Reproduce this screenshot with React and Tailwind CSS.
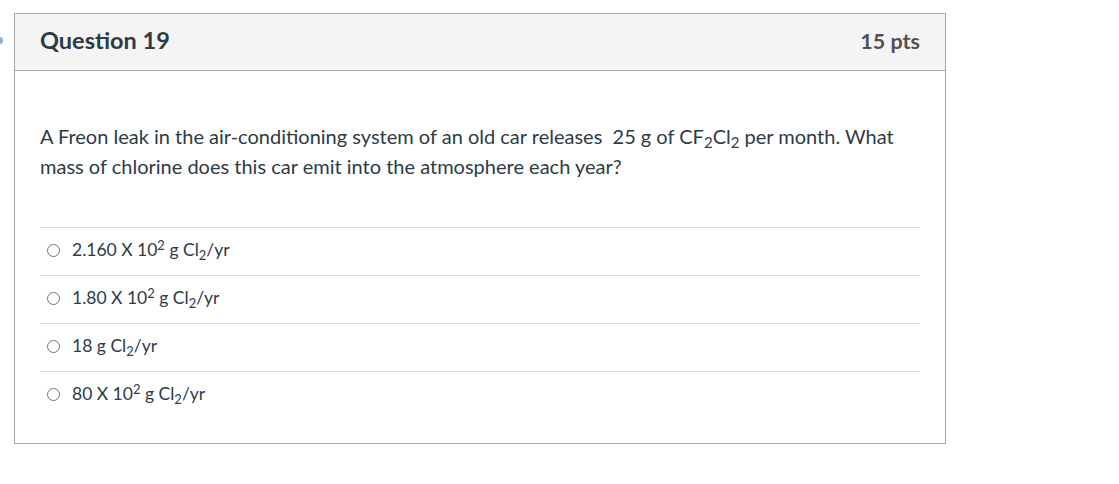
const answers = [
  { lead: "2.160 X 10", exp: "2" },
  { lead: "1.80 X 10", exp: "2" },
  { lead: "18", exp: null },
  { lead: "80 X 10", exp: "2" },
];

function Unit() {
  return (
    <>
      {" "}g Cl<sub className="text-[13px]">2</sub>/yr
    </>
  );
}

export default function App() {
  return (
    <div className="relative w-[1119px] h-[484px] bg-white text-[#2d3b45] font-['Lato','Noto_Sans',sans-serif] pl-[14px] pt-[13px]">
      {/* left edge marker */}
      <div className="absolute left-[-4px] top-[37px] w-[7px] h-[7px] rounded-full bg-[#8fb0c8]" />

      <div className="w-[932px] h-[431px] border border-[#a8a8a8]">
        {/* Header */}
        <div className="flex items-center justify-between h-[57px] px-[25px] pb-[2px] bg-[#f4f4f4] border-b border-[#a8a8a8]">
          <h2 className="text-[23.5px] font-bold">Question 19</h2>
          <span className="text-[21.5px] font-bold text-[#515151]">15 pts</span>
        </div>

        {/* Body */}
        <div className="px-[25px] pt-[50px]">
          <p className="text-[20px] leading-[30px]">
            A Freon leak in the air-conditioning system of an old car releases&nbsp; 25 g of CF
            <sub className="text-[15px]">2</sub>Cl<sub className="text-[15px]">2</sub> per month. What mass of
            chlorine does this car emit into the atmosphere each year?
          </p>

          <div className="mt-[46px] w-[880px]">
            {answers.map((a, i) => (
              <div
                key={i}
                className="flex items-center h-[48px] border-t border-[#dddddd] pl-[7px] pb-[2px]"
              >
                <span className="w-[13px] h-[13px] rounded-full border border-[#767676] bg-white" />
                <span className="ml-[12px] text-[17.5px]">
                  {a.lead}
                  {a.exp && <sup className="text-[13px]">{a.exp}</sup>}
                  <Unit />
                </span>
              </div>
            ))}
          </div>
        </div>
      </div>
    </div>
  );
}
